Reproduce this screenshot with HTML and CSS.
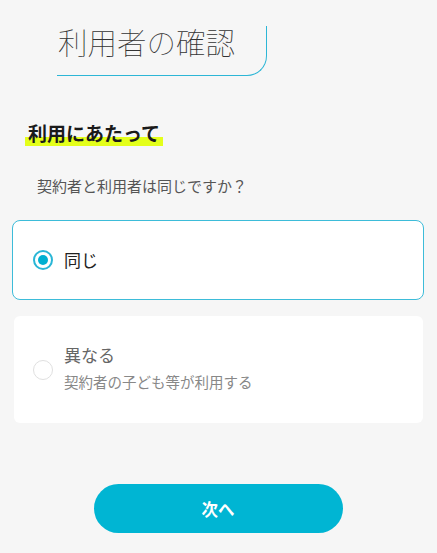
FILE: index.html
```html
<!DOCTYPE html>
<html lang="ja">
<head>
<meta charset="utf-8">
<link rel="stylesheet" href="styles.css">
</head>
<body>
<div class="page">
  <div class="title-box"><h1 class="title">利用者の確認</h1></div>
  <h2 class="heading"><span class="mark">利用にあたって</span></h2>
  <p class="question">契約者と利用者は同じですか？</p>
  <div class="option option-selected">
    <span class="radio radio-on"></span>
    <span class="label">同じ</span>
  </div>
  <div class="option option-plain">
    <span class="radio"></span>
    <div class="texts">
      <span class="label label-muted">異なる</span>
      <span class="sub">契約者の子ども等が利用する</span>
    </div>
  </div>
  <div class="actions"><button class="next">次へ</button></div>
</div>
</body>
</html>
```
FILE: styles.css
```css
* { box-sizing: border-box; }
html, body { margin: 0; padding: 0; }
body {
  background: #f6f6f6;
  font-family: "Noto Sans CJK JP", "Noto Sans", sans-serif;
  width: 437px;
  height: 553px;
  overflow: hidden;
}
.page { display: flex; flex-direction: column; }
.title-box {
  margin: 26px 0 0 57px;
  width: 210px;
  height: 50px;
  border-right: 1.5px solid #2db6d6;
  border-bottom: 1.5px solid #2db6d6;
  border-bottom-right-radius: 20px;
}
.title {
  margin: 0;
  padding-left: 1px;
  font-size: 29.5px;
  font-weight: 100;
  line-height: 30px;
  color: #333;
  letter-spacing: 0;
}
.heading {
  margin: 44px 0 0 25px;
  font-size: 19px;
  font-weight: 700;
  line-height: 26px;
  color: #1a1a1a;
}
.mark {
  display: inline-block;
  padding: 0 3px;
  background: linear-gradient(to bottom, transparent 0, transparent 66%, #e4ff1a 66%, #e4ff1a 100%);
}
.question {
  margin: 30px 0 0 37px;
  font-size: 15px;
  line-height: 20px;
  color: #555;
}
.option {
  display: flex;
  align-items: center;
  background: #fff;
}
.option-selected {
  margin: 24px 13px 0 12px;
  height: 80px;
  border: 1.5px solid #3dbcd9;
  border-radius: 8px;
  padding-left: 20px;
}
.option-plain {
  margin: 16px 14px 0 14px;
  height: 107px;
  border-radius: 6px;
  padding-left: 19px;
}
.radio {
  width: 20px;
  height: 20px;
  border-radius: 50%;
  border: 1.5px solid #e0e0e0;
  flex: none;
  position: relative;
}
.radio-on { border: 2px solid #29b6d6; }
.radio-on::after {
  content: "";
  position: absolute;
  left: 3px; top: 3px;
  width: 10px; height: 10px;
  border-radius: 50%;
  background: #00afd1;
}
.label {
  margin-left: 11px;
  font-size: 17px;
  line-height: 22px;
  color: #222;
}
.texts { display: flex; flex-direction: column; margin-left: 11px; margin-top: -3px; }
.texts .label { margin-left: 0; }
.label-muted { color: #666; }
.sub {
  margin-top: 6px;
  font-size: 14.5px;
  line-height: 20px;
  color: #888;
}
.actions { display: flex; justify-content: center; margin-top: 61px; padding-right: 1px; }
.next {
  width: 249px;
  height: 49px;
  border: none;
  border-radius: 25px;
  background: #00b5d3;
  color: #fff;
  font-family: "Noto Sans CJK JP", sans-serif;
  font-size: 16.5px;
  font-weight: 700;
  padding: 0;
}
```
